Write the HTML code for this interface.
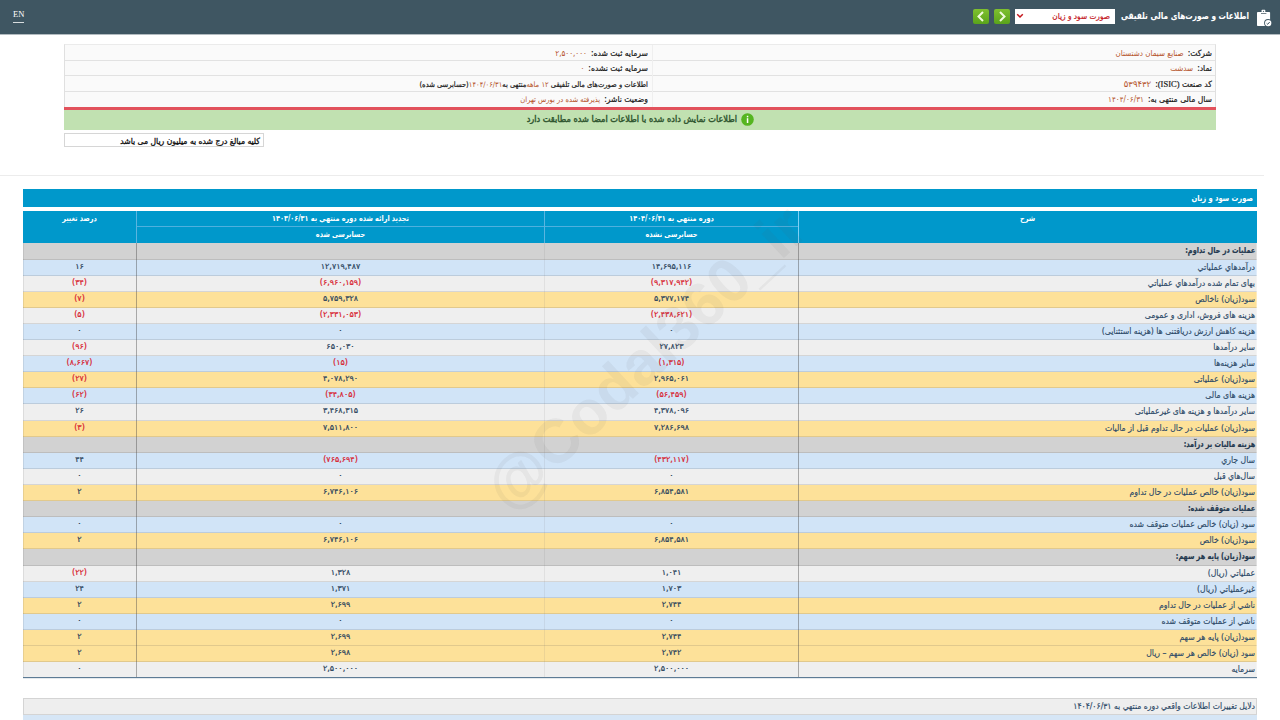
<!DOCTYPE html>
<html lang="fa" dir="rtl">
<head>
<meta charset="utf-8">
<title>اطلاعات و صورت‌های مالی تلفیقی</title>
<style>
*{box-sizing:border-box;margin:0;padding:0}
html,body{width:1280px;height:720px;overflow:hidden;background:#fff}
body{position:relative;font-family:"DejaVu Sans Condensed","DejaVu Sans","Liberation Sans",sans-serif;font-stretch:condensed;font-size:8px;color:#222;direction:rtl}
.abs{position:absolute}
#hdr{left:0;top:0;width:1280px;height:34px;background:#3f5662}
#hdr2{left:0;top:34px;width:1280px;height:1px;background:#b2bbc0}
#en{left:13px;top:9px;font-family:"Liberation Serif",serif;font-size:8.5px;color:#fff;direction:ltr;line-height:10px;border-bottom:1px solid rgba(255,255,255,.8);padding-bottom:3px}
#title{right:31px;top:8px;height:16px;line-height:16px;font-weight:bold;font-size:9.5px;color:#fff;white-space:nowrap;transform:scaleX(.865);transform-origin:100% 50%}
#sel{-webkit-text-stroke:.2px currentColor;left:1015px;top:9px;width:100px;height:15px;background:#fff;color:#c4161c;font-size:8.2px;line-height:15px;padding-right:5px;white-space:nowrap}
.btn{top:9px;width:16px;height:15px;background:linear-gradient(#7fc02f,#5aa31b);border-radius:2px}
#info{left:64px;top:44px;width:1152px;height:63px;background:#fafafa;border:1px solid #e0e0e0;border-top-color:#ebebeb;border-bottom:none}
.il{left:0;width:1150px;height:1px;background:#e2e2e2}
.it{-webkit-text-stroke:.2px currentColor;white-space:nowrap;height:15px;line-height:15px;font-size:8.5px;color:#1a1a1a}
.it b{-webkit-text-stroke:0;font-weight:normal;color:#b5532a;margin-right:4px;font-size:8px}
#red{left:64px;top:107px;width:1152px;height:3px;background:#e2525c}
#green{left:64px;top:110px;width:1152px;height:20px;background:#c1e1b1}
#gt{right:543px;top:110px;height:20px;line-height:19px;color:#2f552f;font-size:9.1px;white-space:nowrap;-webkit-text-stroke:.4px currentColor}
#note{left:64px;top:133px;width:200px;height:14px;border:1px solid #d6d6d6;-webkit-text-stroke:.3px currentColor;font-size:8.5px;line-height:14px;text-align:right;padding-right:3px;color:#111;white-space:nowrap;background:#fff}
#sep{left:0;top:175px;width:1264px;height:1px;background:#ececec}
#tt{left:23px;top:189px;width:1234px;height:18px;background:#0098cb}
#ttt{right:27px;top:189px;height:18px;line-height:18px;color:#fff;font-weight:bold;font-size:8.5px;white-space:nowrap;transform:scaleX(.88);transform-origin:100% 50%}
#th{left:23px;top:211px;width:1234px;height:32px;background:#0098cb;color:#fff;font-weight:bold;font-size:8px}
#th div.h{position:absolute;text-align:center;line-height:15px;white-space:nowrap;transform:scaleX(.9)}
#th div.l{position:absolute}
#tb{left:23px;top:243px;width:1234px}
.r{position:relative;width:1234px;border-bottom:1px solid rgba(80,80,80,.16)}
.r.s{background:#d2d2d2}
.r.b{background:#d1e4f7}
.r.g{background:#efefef}
.r.y{background:#fde199}
.c{position:absolute;top:0;height:15px;line-height:15px;-webkit-text-stroke:.22px currentColor;font-family:"DejaVu Sans","Liberation Sans",sans-serif;font-stretch:normal;font-size:8px;color:#2c445c;white-space:nowrap;text-align:center}
.c0{right:0;width:459px;text-align:right;padding-right:2px;-webkit-text-stroke:.15px currentColor;font-family:"DejaVu Sans Condensed","DejaVu Sans","Liberation Sans",sans-serif;font-stretch:condensed;color:#2d4a68;font-size:8.6px}
.s .c0{font-weight:bold;color:#23384f;font-size:8.5px;transform:scaleX(.856);transform-origin:100% 50%}
.c1{right:459px;width:253px;top:-1px}
.c2{right:712px;width:409px;top:-1px}
.c3{right:1121px;width:113px;top:-1px}
.neg{color:#d8232f}
.vl{top:0;width:1px}
#wm{left:396px;top:323px;width:500px;height:70px;line-height:70px;text-align:center;font-family:"Liberation Sans",sans-serif;font-weight:bold;font-size:62px;color:rgba(90,90,90,.065);transform:rotate(-43deg);direction:ltr;white-space:nowrap;pointer-events:none}
#t2{left:23px;top:698px;width:1234px;height:17px;background:#eeeeee;border:1px solid #d4d4d4;font-size:8.55px;line-height:15px;padding-right:1px;color:#2d4a68;-webkit-text-stroke:.15px currentColor;white-space:nowrap}
#t2b{left:23px;top:715px;width:1234px;height:5px;background:#d6e6f6}
</style>
</head>
<body>
<div id="hdr" class="abs"></div><div id="hdr2" class="abs"></div>
<div id="en" class="abs">EN</div>
<svg class="abs" style="left:1255px;top:8px" width="20" height="22" viewBox="0 0 20 22">
  <rect x="2" y="4" width="13.1" height="14" rx=".8" fill="#fff"/>
  <rect x="6.6" y="1.7" width="3.7" height="3.4" rx=".7" fill="#fff"/>
  <circle cx="8.5" cy="3.3" r=".65" fill="#3f5662"/>
  <rect x="6" y="5" width="5.4" height=".8" fill="#55666f"/>
  <circle cx="13.2" cy="15.1" r="4.1" fill="#3f5662"/>
  <circle cx="13.2" cy="15.1" r="3.2" fill="#fff"/>
  <path d="M11.7 15.4l1 .9 2-2.3" fill="none" stroke="#3f5662" stroke-width="1"/>
</svg>
<div id="title" class="abs">اطلاعات و صورت‌های مالی تلفیقی</div>
<div id="sel" class="abs">صورت سود و زیان</div>
<svg class="abs" style="left:1016px;top:13px" width="8" height="6" viewBox="0 0 8 6"><path d="M1.2 1.2L4 4l2.8-2.8" fill="none" stroke="#c4161c" stroke-width="1.5"/></svg>
<div class="abs btn" style="left:994px"></div>
<div class="abs btn" style="left:973px"></div>
<svg class="abs" style="left:994px;top:9px" width="16" height="15" viewBox="0 0 16 15"><path d="M6 3l4.5 4.5L6 12" fill="none" stroke="#f0fadc" stroke-width="2"/></svg>
<svg class="abs" style="left:973px;top:9px" width="16" height="15" viewBox="0 0 16 15"><path d="M10 3L5.5 7.5 10 12" fill="none" stroke="#f0fadc" stroke-width="2"/></svg>

<div id="info" class="abs">
  <div class="abs il" style="top:15px"></div><div class="abs il" style="top:30px"></div><div class="abs il" style="top:46px"></div><div class="abs" style="left:587px;top:0;width:1px;height:62px;background:#efefef"></div>
  <div class="abs it" style="right:3px;top:1px">شرکت:<b>صنایع سیمان دشتستان</b></div>
  <div class="abs it" style="right:3px;top:16px">نماد:<b>سدشت</b></div>
  <div class="abs it" style="right:3px;top:32px">کد صنعت <span style="font-family:'Liberation Serif',serif">(ISIC)</span>:<b style="font-family:'DejaVu Sans',sans-serif;font-stretch:normal;font-size:8.5px">۵۳۹۴۳۲</b></div>
  <div class="abs it" style="right:3px;top:47px">سال مالی منتهی به:<b>۱۴۰۴/۰۶/۳۱</b></div>
  <div class="abs it" style="right:567px;top:1px">سرمایه ثبت شده:<b>۲,۵۰۰,۰۰۰</b></div>
  <div class="abs it" style="right:567px;top:16px">سرمایه ثبت نشده:<b>۰</b></div>
  <div class="abs it" style="right:567px;top:32px;font-size:7.5px">اطلاعات و صورت‌های مالی تلفیقی <b style="margin:0;font-size:7.5px">۱۲ ماهه</b>&zwnj;منتهی به<b style="margin:0;font-size:7.5px">۱۴۰۴/۰۶/۳۱</b>(حسابرسی شده)</div>
  <div class="abs it" style="right:567px;top:47px">وضعیت ناشر:<b style="font-size:7.5px">پذیرفته شده در بورس تهران</b></div>
</div>
<div id="red" class="abs"></div>
<div id="green" class="abs"></div><div id="gt" class="abs">اطلاعات نمایش داده شده با اطلاعات امضا شده مطابقت دارد</div>
<svg class="abs" style="left:741px;top:113px" width="13" height="13" viewBox="0 0 13 13"><circle cx="6.5" cy="6.5" r="6.3" fill="#55b520"/><rect x="5.8" y="5.2" width="1.5" height="4.8" fill="#fff"/><rect x="5.8" y="2.8" width="1.5" height="1.5" fill="#fff"/></svg>
<div id="note" class="abs">کلیه مبالغ درج شده به میلیون ریال می باشد</div>
<div id="sep" class="abs"></div>

<div id="tt" class="abs"></div><div id="ttt" class="abs">صورت سود و زیان</div>
<div id="th" class="abs">
  <div class="h" style="right:0;width:459px;top:0">شرح</div>
  <div class="h" style="right:459px;width:253px;top:0">دوره منتهي به ۱۴۰۴/۰۶/۳۱</div>
  <div class="h" style="right:459px;width:253px;top:16px">حسابرسی نشده</div>
  <div class="h" style="right:712px;width:409px;top:0">تجدید ارائه شده دوره منتهي به ۱۴۰۳/۰۶/۳۱</div>
  <div class="h" style="right:712px;width:409px;top:16px">حسابرسی شده</div>
  <div class="h" style="right:1121px;width:113px;top:0">درصد تغییر</div>
  <div class="l" style="left:113px;top:15px;width:662px;height:1px;background:#4fb0de"></div>
  <div class="l" style="left:113px;top:0;width:1px;height:32px;background:#5ab5e0"></div>
  <div class="l" style="left:521px;top:0;width:1px;height:32px;background:#5ab5e0"></div>
  <div class="l" style="left:775px;top:0;width:1px;height:32px;background:#7fd0f5"></div>
</div>
<div id="tb" class="abs">
<div class="r s" style="height:17px"><div class="c c0">عملیات در حال تداوم:</div><div class="c c1"></div><div class="c c2"></div><div class="c c3"></div></div>
<div class="r b" style="height:16px"><div class="c c0">درآمدهاي عملياتي</div><div class="c c1">۱۴,۶۹۵,۱۱۶</div><div class="c c2">۱۲,۷۱۹,۴۸۷</div><div class="c c3">۱۶</div></div>
<div class="r g" style="height:16px"><div class="c c0">بهاى تمام شده درآمدهاي عملياتي</div><div class="c c1 neg">(۹,۳۱۷,۹۴۲)</div><div class="c c2 neg">(۶,۹۶۰,۱۵۹)</div><div class="c c3 neg">(۳۴)</div></div>
<div class="r y" style="height:16px"><div class="c c0">سود(زيان) ناخالص</div><div class="c c1">۵,۳۷۷,۱۷۴</div><div class="c c2">۵,۷۵۹,۳۲۸</div><div class="c c3 neg">(۷)</div></div>
<div class="r g" style="height:16px"><div class="c c0">هزينه هاى فروش، ادارى و عمومى</div><div class="c c1 neg">(۲,۴۳۸,۶۲۱)</div><div class="c c2 neg">(۲,۳۳۱,۰۵۳)</div><div class="c c3 neg">(۵)</div></div>
<div class="r b" style="height:16px"><div class="c c0">هزینه کاهش ارزش دریافتنی ها (هزینه استثنایی)</div><div class="c c1">۰</div><div class="c c2">۰</div><div class="c c3">۰</div></div>
<div class="r g" style="height:16px"><div class="c c0">ساير درآمدها</div><div class="c c1">۲۷,۸۲۳</div><div class="c c2">۶۵۰,۰۳۰</div><div class="c c3 neg">(۹۶)</div></div>
<div class="r b" style="height:16px"><div class="c c0">ساير هزينه‌ها</div><div class="c c1 neg">(۱,۳۱۵)</div><div class="c c2 neg">(۱۵)</div><div class="c c3 neg">(۸,۶۶۷)</div></div>
<div class="r y" style="height:16px"><div class="c c0">سود(زيان) عملياتى</div><div class="c c1">۲,۹۶۵,۰۶۱</div><div class="c c2">۴,۰۷۸,۲۹۰</div><div class="c c3 neg">(۲۷)</div></div>
<div class="r b" style="height:16px"><div class="c c0">هزينه هاى مالى</div><div class="c c1 neg">(۵۶,۴۵۹)</div><div class="c c2 neg">(۳۴,۸۰۵)</div><div class="c c3 neg">(۶۲)</div></div>
<div class="r g" style="height:17px"><div class="c c0">ساير درآمدها و هزينه هاى غيرعملياتى</div><div class="c c1">۴,۳۷۸,۰۹۶</div><div class="c c2">۳,۴۶۸,۳۱۵</div><div class="c c3">۲۶</div></div>
<div class="r y" style="height:16px"><div class="c c0">سود(زيان) عمليات در حال تداوم قبل از ماليات</div><div class="c c1">۷,۲۸۶,۶۹۸</div><div class="c c2">۷,۵۱۱,۸۰۰</div><div class="c c3 neg">(۳)</div></div>
<div class="r s" style="height:16px"><div class="c c0">هزينه ماليات بر درآمد:</div><div class="c c1"></div><div class="c c2"></div><div class="c c3"></div></div>
<div class="r b" style="height:16px"><div class="c c0">سال جاري</div><div class="c c1 neg">(۴۳۲,۱۱۷)</div><div class="c c2 neg">(۷۶۵,۶۹۴)</div><div class="c c3">۴۴</div></div>
<div class="r g" style="height:16px"><div class="c c0">سال‌هاي قبل</div><div class="c c1">۰</div><div class="c c2">۰</div><div class="c c3">۰</div></div>
<div class="r y" style="height:16px"><div class="c c0">سود(زيان) خالص عمليات در حال تداوم</div><div class="c c1">۶,۸۵۴,۵۸۱</div><div class="c c2">۶,۷۴۶,۱۰۶</div><div class="c c3">۲</div></div>
<div class="r s" style="height:16px"><div class="c c0">عملیات متوقف شده:</div><div class="c c1"></div><div class="c c2"></div><div class="c c3"></div></div>
<div class="r b" style="height:16px"><div class="c c0">سود (زيان) خالص عمليات متوقف شده</div><div class="c c1">۰</div><div class="c c2">۰</div><div class="c c3">۰</div></div>
<div class="r y" style="height:16px"><div class="c c0">سود(زيان) خالص</div><div class="c c1">۶,۸۵۴,۵۸۱</div><div class="c c2">۶,۷۴۶,۱۰۶</div><div class="c c3">۲</div></div>
<div class="r s" style="height:17px"><div class="c c0">سود(زيان) پايه هر سهم:</div><div class="c c1"></div><div class="c c2"></div><div class="c c3"></div></div>
<div class="r g" style="height:16px"><div class="c c0">عملياتي (ريال)</div><div class="c c1">۱,۰۴۱</div><div class="c c2">۱,۳۲۸</div><div class="c c3 neg">(۲۲)</div></div>
<div class="r b" style="height:16px"><div class="c c0">غيرعملياتي (ريال)</div><div class="c c1">۱,۷۰۳</div><div class="c c2">۱,۳۷۱</div><div class="c c3">۲۴</div></div>
<div class="r y" style="height:16px"><div class="c c0">ناشي از عمليات در حال تداوم</div><div class="c c1">۲,۷۴۴</div><div class="c c2">۲,۶۹۹</div><div class="c c3">۲</div></div>
<div class="r b" style="height:16px"><div class="c c0">ناشي از عمليات متوقف شده</div><div class="c c1">۰</div><div class="c c2">۰</div><div class="c c3">۰</div></div>
<div class="r y" style="height:16px"><div class="c c0">سود(زيان) پايه هر سهم</div><div class="c c1">۲,۷۴۴</div><div class="c c2">۲,۶۹۹</div><div class="c c3">۲</div></div>
<div class="r y" style="height:16px"><div class="c c0">سود (زيان) خالص هر سهم – ريال</div><div class="c c1">۲,۷۴۲</div><div class="c c2">۲,۶۹۸</div><div class="c c3">۲</div></div>
<div class="r g" style="height:16px"><div class="c c0">سرمايه</div><div class="c c1">۲,۵۰۰,۰۰۰</div><div class="c c2">۲,۵۰۰,۰۰۰</div><div class="c c3">۰</div></div>
  <div class="abs vl" style="left:0;height:435px;background:rgba(80,80,80,.12)"></div>
  <div class="abs vl" style="left:113px;height:435px;background:rgba(70,70,70,.42)"></div>
  <div class="abs vl" style="left:521px;height:435px;background:rgba(120,120,120,.13)"></div>
  <div class="abs vl" style="left:775px;height:435px;background:rgba(70,70,70,.42)"></div>
  <div class="abs vl" style="left:1233px;height:435px;background:rgba(255,255,255,.35)"></div>
  <div class="abs" style="left:0;top:434px;width:1234px;height:1px;background:#5d7b95"></div><div class="abs" style="left:0;top:435px;width:1234px;height:1px;background:rgba(75,106,132,.15)"></div>
</div>
<div id="wm" class="abs">@Codal360_ir</div>
<div id="t2" class="abs">دلایل تغییرات اطلاعات واقعي دوره منتهي به ۱۴۰۴/۰۶/۳۱</div>
<div id="t2b" class="abs"></div>
</body>
</html>
